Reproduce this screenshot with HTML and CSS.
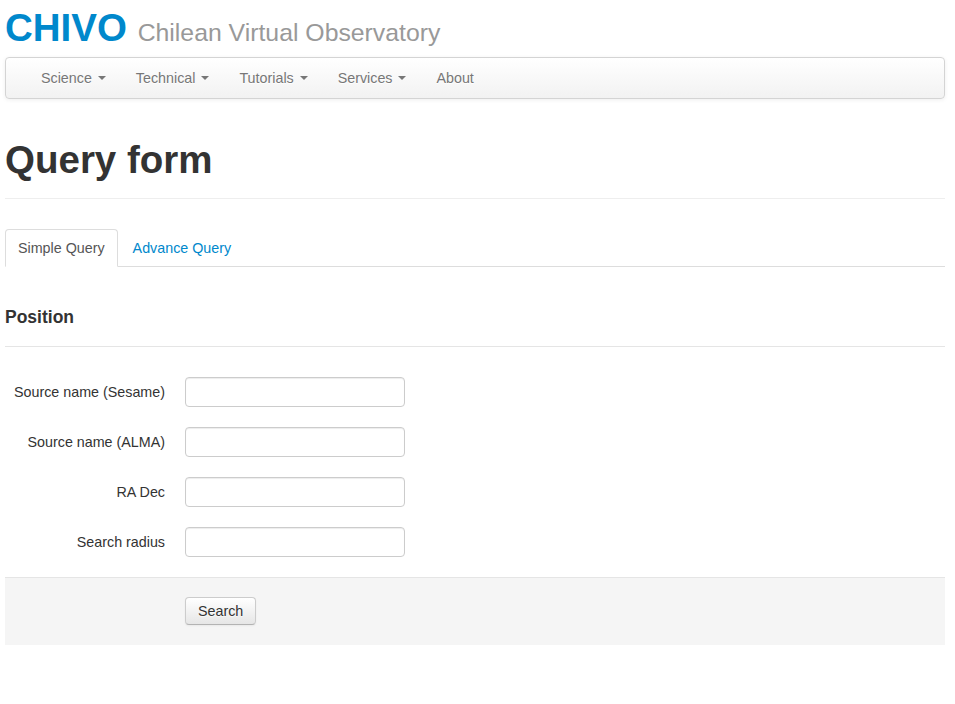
FILE: index.html
```html
<!DOCTYPE html>
<html>
<head>
<meta charset="utf-8">
<title>Query form</title>
<link rel="stylesheet" href="styles.css">
</head>
<body>
<div class="container">
  <h1 class="site-title">CHIVO <small>Chilean Virtual Observatory</small></h1>
  <div class="navbar">
    <ul class="nav">
      <li><a href="#">Science <b class="caret"></b></a></li>
      <li><a href="#">Technical <b class="caret"></b></a></li>
      <li><a href="#">Tutorials <b class="caret"></b></a></li>
      <li><a href="#">Services <b class="caret"></b></a></li>
      <li><a href="#">About</a></li>
    </ul>
  </div>
  <div class="page-header"><h1>Query form</h1></div>
  <ul class="tabs">
    <li class="active"><a href="#">Simple Query</a></li>
    <li><a href="#">Advance Query</a></li>
  </ul>
  <form class="form-horizontal">
    <div class="legend">Position</div>
    <div class="control-group">
      <label class="control-label">Source name (Sesame)</label>
      <div class="controls"><input type="text"></div>
    </div>
    <div class="control-group">
      <label class="control-label">Source name (ALMA)</label>
      <div class="controls"><input type="text"></div>
    </div>
    <div class="control-group">
      <label class="control-label">RA Dec</label>
      <div class="controls"><input type="text"></div>
    </div>
    <div class="control-group">
      <label class="control-label">Search radius</label>
      <div class="controls"><input type="text"></div>
    </div>
    <div class="form-actions">
      <button type="button" class="btn">Search</button>
    </div>
  </form>
</div>
</body>
</html>
```
FILE: styles.css
```css
html, body { margin: 0; padding: 0; }
body {
  font-family: "Liberation Sans", Arial, sans-serif;
  font-size: 14.3px;
  line-height: 20px;
  color: #333;
  background: #fff;
}
.container { width: 940px; margin-left: 5px; }
.site-title {
  margin: 8px 0 9px;
  height: 40px;
  font-size: 38.5px;
  line-height: 40px;
  font-weight: bold;
  color: #0088cc;
}
.site-title small {
  font-size: 24.8px;
  line-height: 1;
  font-weight: normal;
  color: #999;
}
.navbar {
  height: 40px;
  border: 1px solid #d4d4d4;
  border-radius: 4px;
  background: linear-gradient(to bottom, #ffffff, #f2f2f2);
  box-shadow: 0 1px 4px rgba(0,0,0,0.065);
  padding: 0 20px;
}
.nav { list-style: none; margin: 0; padding: 0; display: flex; }
.nav li a {
  display: block;
  padding: 10px 15px;
  color: #777;
  text-decoration: none;
  text-shadow: 0 1px 0 #fff;
}
.caret {
  display: inline-block;
  width: 0; height: 0;
  vertical-align: top;
  margin-top: 8px;
  margin-left: 2px;
  border-top: 4px solid #777;
  border-left: 4px solid transparent;
  border-right: 4px solid transparent;
}
.page-header {
  margin: 41px 0 30px;
  padding-bottom: 8px;
  border-bottom: 1px solid #eee;
}
.page-header h1 {
  margin: 0 0 10px;
  font-size: 38.5px;
  line-height: 40px;
  font-weight: bold;
  color: #333;
}
.tabs {
  list-style: none;
  margin: 0 0 20px;
  padding: 0;
  display: flex;
  border-bottom: 1px solid #ddd;
}
.tabs li { margin-bottom: -1px; margin-right: 2px; }
.tabs li a {
  display: block;
  padding: 8px 12px;
  border: 1px solid transparent;
  border-radius: 4px 4px 0 0;
  color: #0088cc;
  text-decoration: none;
}
.tabs li.active a {
  color: #555;
  background: #fff;
  border-color: #ddd #ddd transparent;
}
.form-horizontal { margin: 0; }
.legend {
  margin: 30px 0 30px;
  padding-bottom: 9px;
  font-size: 17.5px;
  line-height: 40px;
  font-weight: bold;
  color: #333;
  border-bottom: 1px solid #e5e5e5;
}
.control-group { display: flex; margin-bottom: 20px; }
.control-label {
  width: 160px;
  padding-top: 5px;
  text-align: right;
  color: #333;
}
.controls { margin-left: 20px; }
.controls input {
  box-sizing: border-box;
  width: 220px;
  height: 30px;
  margin: 0;
  padding: 4px 6px;
  font-family: inherit;
  font-size: 14px;
  border: 1px solid #ccc;
  border-radius: 4px;
  box-shadow: inset 0 1px 1px rgba(0,0,0,0.075);
  background: #fff;
}
.form-actions {
  padding: 19px 20px 20px 180px;
  background: #f5f5f5;
  border-top: 1px solid #e5e5e5;
}
.btn {
  display: block;
  height: 28px;
  padding: 3px 12px;
  font-family: inherit;
  font-size: 14.3px;
  line-height: 20px;
  color: #333;
  text-shadow: 0 1px 1px rgba(255,255,255,0.75);
  background: linear-gradient(to bottom, #ffffff, #e6e6e6);
  border: 1px solid #ccc;
  border-bottom-color: #b3b3b3;
  border-radius: 4px;
  box-shadow: inset 0 1px 0 rgba(255,255,255,0.2), 0 1px 2px rgba(0,0,0,0.05);
}
```
